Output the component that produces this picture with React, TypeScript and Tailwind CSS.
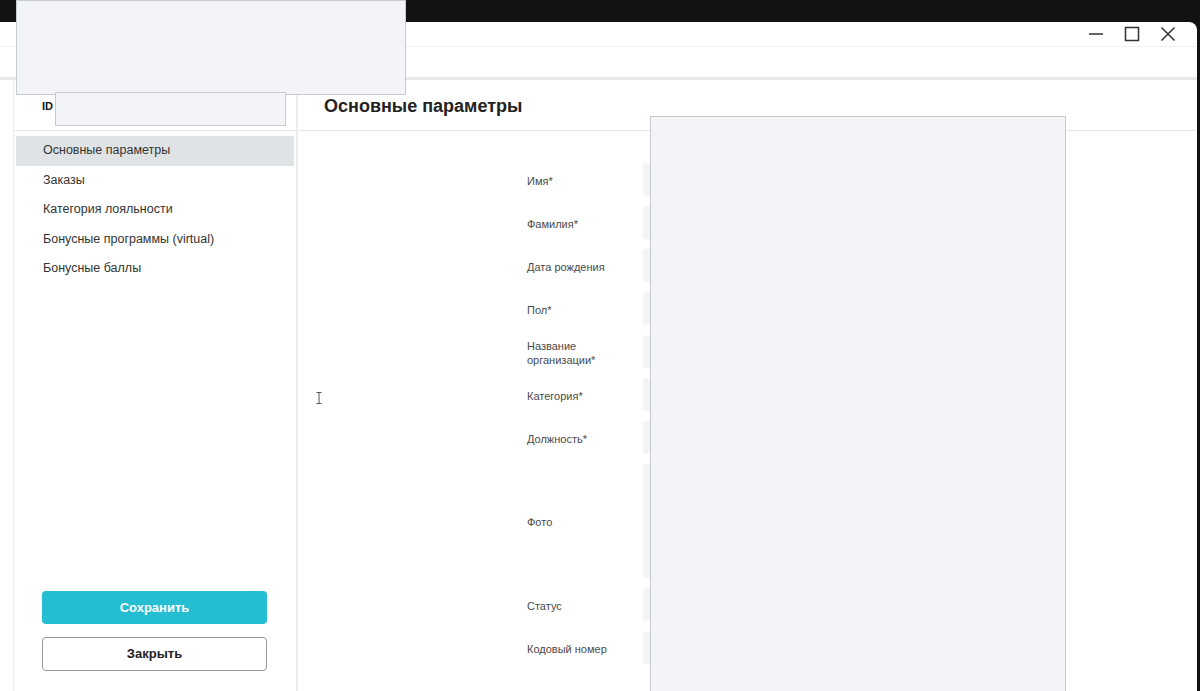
import { useState } from "react";

const menuItems = [
    "Основные параметры",
    "Заказы",
    "Категория лояльности",
    "Бонусные программы (virtual)",
    "Бонусные баллы",
];

const fields = [
    { label: "Имя*", h: "h-[33px]" },
    { label: "Фамилия*", h: "h-[33px]" },
    { label: "Дата рождения", h: "h-[33px]" },
    { label: "Пол*", h: "h-[33px]" },
    { label: "Название организации*", h: "h-[33px]" },
    { label: "Категория*", h: "h-[33px]" },
    { label: "Должность*", h: "h-[33px]" },
    { label: "Фото", h: "h-[114px]" },
    { label: "Статус", h: "h-[33px]" },
    { label: "Кодовый номер", h: "h-[33px]" },
];

function WindowControls() {
    return (
        <div className="flex items-center gap-[20px] pr-[21px] text-[#333]">
            <svg width="16" height="16" viewBox="0 0 16 16">
                <line x1="1" y1="8" x2="15" y2="8" stroke="currentColor" strokeWidth="1.6" />
            </svg>
            <svg width="16" height="16" viewBox="0 0 16 16">
                <rect x="1.5" y="1.5" width="13" height="13" fill="none" stroke="currentColor" strokeWidth="1.5" />
            </svg>
            <svg width="16" height="16" viewBox="0 0 16 16">
                <path d="M1.5 1.5 L14.5 14.5 M14.5 1.5 L1.5 14.5" stroke="currentColor" strokeWidth="1.5" />
            </svg>
        </div>
    );
}

function Sidebar() {
    const [active, setActive] = useState(0);

    return (
        <aside className="flex w-[285px] flex-col border-l border-r-2 border-l-[#ececec] border-r-[#ececec]">
            <div className="flex h-[51px] items-center border-b border-[#e6e6e6] pl-[28px] pt-[2px]">
                <span className="text-[11px] font-bold text-[#111]">ID</span>
            </div>
            <nav className="px-[2px] pt-[5px]">
                {menuItems.map((item, i) => (
                    <div
                        key={item}
                        onClick={() => setActive(i)}
                        className={
                            "flex h-[29.5px] cursor-pointer items-center pl-[27px] text-[12.5px] text-[#333] " +
                            (i === active ? "bg-[#dfe3e6]" : "")
                        }
                    >
                        {item}
                    </div>
                ))}
            </nav>
            <div className="mt-auto flex flex-col gap-[13px] pb-[20px] pl-[28px]">
                <button className="h-[33px] w-[225px] rounded-[4px] bg-[#25bdd1] text-[13px] font-bold text-white">
                    Сохранить
                </button>
                <button className="h-[34px] w-[225px] rounded-[4px] border border-[#9a9a9a] bg-white text-[13px] font-bold text-[#222]">
                    Закрыть
                </button>
            </div>
        </aside>
    );
}

function MainForm() {
    return (
        <section className="relative flex flex-1 flex-col">
            <div className="flex h-[51px] items-center border-b border-[#e6e6e6] pl-[26px] pt-[3px]">
                <h1 className="text-[18px] font-bold text-[#222]">Основные параметры</h1>
            </div>
            <div className="flex flex-col gap-[10px] pl-[229px] pr-[140px] pt-[32px]">
                {fields.map((f) => (
                    <div key={f.label} className="flex items-center">
                        <label className="w-[116px] pr-[14px] pt-[2px] text-[11px] leading-[14px] text-[#4a4a4a]">
                            {f.label}
                        </label>
                        <div className={"flex-1 rounded-[3px] bg-[#f3f4f6] " + f.h} />
                    </div>
                ))}
            </div>
            {/* text cursor */}
            <svg className="absolute left-[18px] top-[312px]" width="6" height="12" viewBox="0 0 6 12">
                <path d="M0.5 0.5 H5.5 M3 0.5 V11.5 M0.5 11.5 H5.5" stroke="#555" strokeWidth="1" fill="none" />
            </svg>
        </section>
    );
}

export default function App() {
    return (
        <div
            className="relative h-[691px] w-[1200px] overflow-hidden bg-[#121212]"
            style={{ fontFamily: '"Liberation Sans", Arial, sans-serif' }}
        >
            <div className="flex h-full flex-col pr-[3px] pt-[22px]">
                <div className="flex flex-1 flex-col overflow-hidden rounded-tr-[8px] bg-white">
                    <div className="flex h-[25px] items-center justify-end border-b border-[#f0f0f0]">
                        <WindowControls />
                    </div>
                    <div className="h-[33px] border-b-[3px] border-[#e8e8e8]" />
                    <div className="flex flex-1 pl-[13px]">
                        <Sidebar />
                        <MainForm />
                    </div>
                </div>
            </div>

            {/* masked areas */}
            <div className="absolute left-[16px] top-0 h-[95px] w-[390px] border border-[#c6cad1] bg-[#f3f4f8]" />
            <div className="absolute left-[55px] top-[92px] h-[34px] w-[231px] border border-[#c6cad1] bg-[#f3f4f8]" />
            <div className="absolute left-[650px] top-[116px] h-[580px] w-[416px] border border-[#c6cad1] bg-[#f3f4f8]" />
        </div>
    );
}
